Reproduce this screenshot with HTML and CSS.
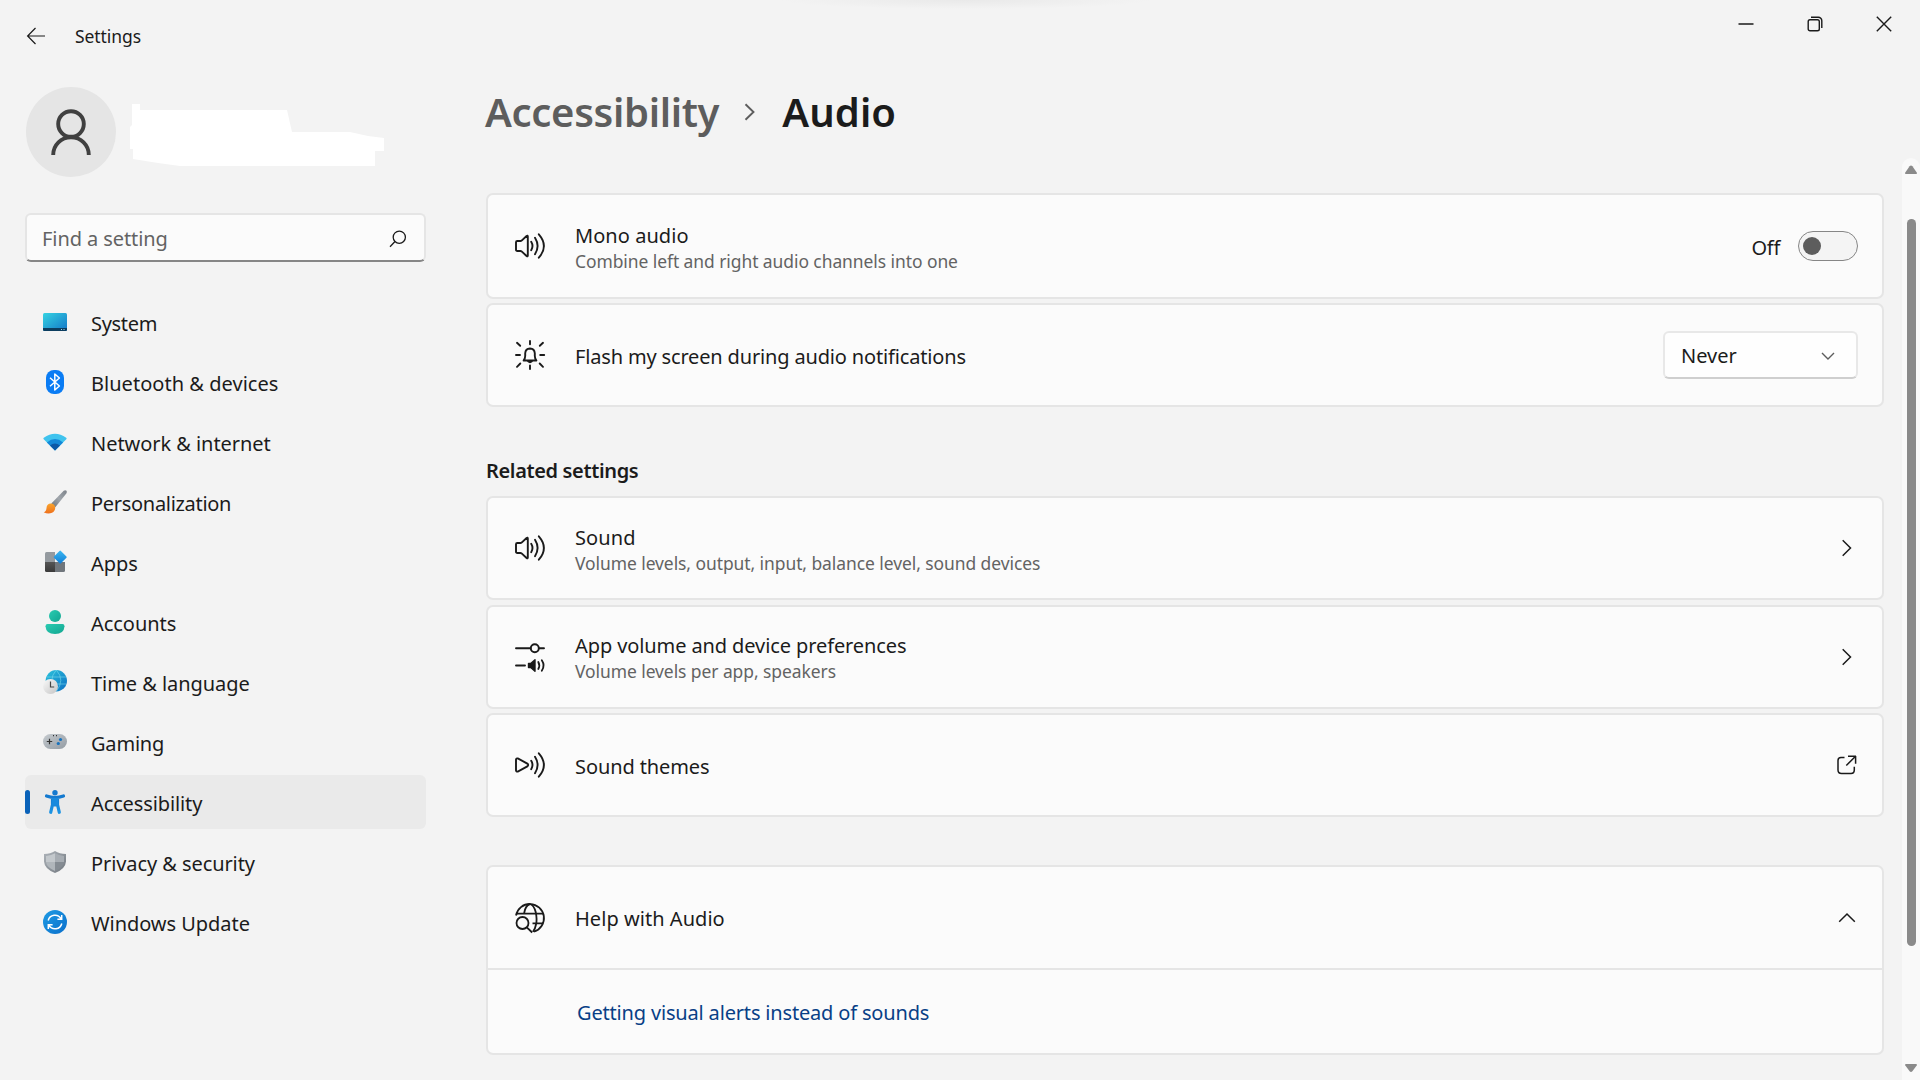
FILE: index.html
```html
<!DOCTYPE html>
<html lang="en">
<head>
<meta charset="utf-8">
<title>Settings</title>
<link rel="stylesheet" href="styles.css">
</head>
<body>
<svg class="defs" width="0" height="0" aria-hidden="true">
  <defs>
    <linearGradient id="gScreen" x1="0" y1="0" x2="1" y2="1"><stop offset="0" stop-color="#35d3e2"/><stop offset="1" stop-color="#1276c8"/></linearGradient>
    <linearGradient id="gBrush" x1="1" y1="0" x2="0" y2="1"><stop offset="0" stop-color="#7c8289"/><stop offset=".5" stop-color="#a0a6ac"/><stop offset="1" stop-color="#6d7379"/></linearGradient>
    <linearGradient id="gBristle" x1="0" y1="0" x2="0" y2="1"><stop offset="0" stop-color="#f9a52c"/><stop offset="1" stop-color="#ee6f1c"/></linearGradient>
    <linearGradient id="gDiamond" x1="0" y1="0" x2="1" y2="1"><stop offset="0" stop-color="#3cb9f2"/><stop offset="1" stop-color="#0f7cd6"/></linearGradient>
    <linearGradient id="gDark" x1="0" y1="0" x2="0" y2="1"><stop offset="0" stop-color="#555"/><stop offset="1" stop-color="#3a3a3a"/></linearGradient>
    <linearGradient id="gGreen" x1="0" y1="0" x2="1" y2="1"><stop offset="0" stop-color="#2acbb2"/><stop offset="1" stop-color="#12a690"/></linearGradient>
    <linearGradient id="gGlobe" x1="0" y1="0" x2="1" y2="1"><stop offset="0" stop-color="#2cc3dc"/><stop offset="1" stop-color="#0d6fc2"/></linearGradient>
    <linearGradient id="gClock" x1="0" y1="0" x2="1" y2="1"><stop offset="0" stop-color="#fafafa"/><stop offset="1" stop-color="#c4c4c4"/></linearGradient>
    <linearGradient id="gPad" x1="0" y1="0" x2="1" y2="1"><stop offset="0" stop-color="#c6cbcf"/><stop offset="1" stop-color="#939ba3"/></linearGradient>
    <linearGradient id="gPerson" x1="0" y1="0" x2="0" y2="1"><stop offset="0" stop-color="#1479cf"/><stop offset="1" stop-color="#1b93e3"/></linearGradient>
    <linearGradient id="gShield" x1="0" y1="0" x2="1" y2="1"><stop offset="0" stop-color="#aeb4ba"/><stop offset="1" stop-color="#70777e"/></linearGradient>
    <linearGradient id="gUpdate" x1="0" y1="0" x2="1" y2="1"><stop offset="0" stop-color="#1e9be4"/><stop offset="1" stop-color="#0a6fcb"/></linearGradient>
    <g id="waves" fill="none" stroke="#1a1a1a" stroke-width="1.9" stroke-linecap="round">
      <path d="M16.2 10.8q2.6 4.2 0 8.4M20 6.8q5.2 8.200 0 16.400M23.800 3.300q10.200 11.700 0 23.400"/>
    </g>
    <g id="speaker"><path d="M1 11.300q0-1.300 1.300-1.300h3.200q.6 0 1.100-.4L11.600 5q1.200-.9 1.200.6v18.800q0 1.500-1.200.6L6.600 20.400q-.5-.4-1.100-.4H2.300Q1 20 1 18.700z" fill="none" stroke="#1a1a1a" stroke-width="1.900" stroke-linejoin="round"/><use href="#waves"/></g>
  </defs>
</svg>

<div class="window">
  <header class="titlebar">
    <svg class="back" width="20" height="18" viewBox="0 0 20 18"><path d="M9.500 1L1.600 9l7.900 8M1.600 9h17.400" fill="none" stroke="#1a1a1a" stroke-width="1.200"/></svg>
    <span class="app-name">Settings</span>
    <div class="controls">
      <span class="control"><svg width="16" height="16"><path d="M.5 8h15" stroke="#1a1a1a" stroke-width="1.500"/></svg></span>
      <span class="control"><svg width="16" height="16" fill="none" stroke="#1a1a1a" stroke-width="1.400"><rect x="1.200" y="3.700" width="11.100" height="11.100" rx="1.800"/><path d="M4 1.200h7.300a3.500 3.500 0 0 1 3.500 3.500V12"/></svg></span>
      <span class="control"><svg width="16" height="16"><path d="M.8.800l14.400 14.400M15.200.800L.8 15.200" stroke="#1a1a1a" stroke-width="1.400"/></svg></span>
    </div>
  </header>

  <div class="body">
    <aside class="sidebar">
      <div class="profile">
        <div class="avatar"><svg width="42" height="48" viewBox="0 0 42 48" fill="none" stroke="#404040" stroke-width="3.900"><circle cx="21" cy="15" r="12.800"/><path d="M3.200 46c0-10.200 8-17.700 17.800-17.700S38.800 35.800 38.800 46"/></svg></div>
        <svg class="account" width="256" height="64" viewBox="129 103 256 64"><path d="M132 104h8v6h147l5 22h58l18 4 16 2v13h-9v15H180l-22-3-25-4v-10h-3v-22l2-2z" fill="#fff"/></svg>
      </div>

      <div class="search">
        <span class="placeholder">Find a setting</span>
        <svg width="18" height="18" viewBox="0 0 18 18" fill="none" stroke="#1a1a1a" stroke-width="1.300"><circle cx="10.300" cy="7.200" r="6.100"/><path d="M6 11.500L1 16.700"/></svg>
      </div>

      <nav class="nav">
        <a class="item system"><svg width="24" height="24" viewBox="0 0 24 24"><rect y="3" width="24" height="18" rx="1.500" fill="url(#gScreen)"/><path d="M0 18h24v1.500a1.500 1.500 0 0 1-1.500 1.500h-21A1.500 1.500 0 0 1 0 19.500z" fill="#0c3d5f"/><path d="M18 19.500h1M20.500 19.500h1" stroke="#9fd8ee"/></svg><span>System</span></a>
        <a class="item bluetooth"><svg width="24" height="24" viewBox="0 0 24 24"><rect x="3" width="18" height="24" rx="8" fill="#0a7cf4"/><path d="M7 7.800l9.400 8.200-4.600 4V4l4.600 4L7 16.200" fill="none" stroke="#fff" stroke-width="1.500" stroke-linejoin="round"/></svg><span>Bluetooth &amp; devices</span></a>
        <a class="item"><svg width="24" height="24" viewBox="0 0 24 24"><path d="M12 20.500L.5 9q-.4-.7.300-1.200Q12-.2 23.200 7.800q.7.500.3 1.200z" fill="#3fc3ee"/><path d="M12 20.500L3.900 12.400q8.100-6.800 16.200 0z" fill="#1488d8"/><path d="M12 20.500L7 15.500q5-4 10 0z" fill="#0c58a6"/></svg><span>Network &amp; internet</span></a>
        <a class="item personal"><svg width="24" height="24" viewBox="0 0 24 24"><path d="M8.300 13.500L20.700.8Q22.300-.4 23.500.8q.9 1.300-.2 2.800L12.300 17.300z" fill="url(#gBrush)"/><path d="M.7 22.300q2.700-.8 2.800-4.300.3-4.300 4.300-4.500 3.900.1 4.400 4 .1 3.600-3.200 5.300-4 1.600-8.300-.5z" fill="url(#gBristle)"/></svg><span>Personalization</span></a>
        <a class="item apps"><svg width="24" height="24" viewBox="0 0 24 24"><path d="M2 3.500A1.500 1.500 0 0 1 3.500 2H12v10H2z" fill="#949a9f"/><path d="M12 12h10v8.500a1.500 1.500 0 0 1-1.500 1.500H12z" fill="#70767c"/><path d="M2 12h10v10H3.500A1.500 1.500 0 0 1 2 20.500z" fill="url(#gDark)"/><rect x="12.300" y="2.200" width="9.800" height="9.800" rx="1" transform="rotate(45 17.200 7.100)" fill="url(#gDiamond)"/></svg><span>Apps</span></a>
        <a class="item"><svg width="24" height="24" viewBox="0 0 24 24" fill="url(#gGreen)"><circle cx="12" cy="6" r="6"/><path d="M4.500 14h15q2 0 2 2.200Q21 24 12 24t-9.500-7.800Q2.500 14 4.500 14z"/></svg><span>Accounts</span></a>
        <a class="item"><svg width="24" height="24" viewBox="0 0 24 24"><circle cx="13.300" cy="10.700" r="10.700" fill="url(#gGlobe)"/><path d="M4 7h19M4 14h19M13.300 0q-9 10 0 21.400M13.300 0q9 10 0 21.400" fill="none" stroke="#7fe0ee" stroke-opacity=".55"/><circle cx="7.500" cy="16.400" r="7.500" fill="url(#gClock)"/><path d="M7.500 11.500v5.500h3.700" fill="none" stroke="#444" stroke-width="1.200"/></svg><span>Time &amp; language</span></a>
        <a class="item gaming"><svg width="24" height="24" viewBox="0 0 24 24"><rect y="4" width="24" height="15" rx="7.500" fill="url(#gPad)"/><path d="M3.800 11.500h5.400M6.500 8.800v5.400M10 5.700h1M13 5.700h1" stroke="#333" stroke-width="1.200"/><circle cx="17.500" cy="9.500" r="1.600" fill="#1671bd"/><circle cx="15.300" cy="13.500" r="1.600" fill="#1671bd"/></svg><span>Gaming</span></a>
        <a class="item selected"><svg width="24" height="24" viewBox="0 0 24 24"><circle cx="12" cy="2.700" r="2.700" fill="#1479cf"/><path d="M3.500 6Q12 9.200 20.500 6M9.500 8h5v7h-5zM10 12.500L7.700 22.300M14 12.500l2.300 9.800" fill="none" stroke="url(#gPerson)" stroke-width="3.200" stroke-linecap="round" stroke-linejoin="round"/><path d="M9 8h6v7H9z" fill="#178ade"/></svg><span>Accessibility</span></a>
        <a class="item privacy"><svg width="24" height="24" viewBox="0 0 24 24"><path d="M12 1q4.500 3 11 3v7.500Q22.500 19 12 23 1.500 19 1 11.500V4q6.500 0 11-3z" fill="url(#gShield)"/><path d="M12 3.300q3.800 2.300 9 2.600V12h-9z" fill="#a7adb3"/><path d="M12 3.300Q8.200 5.600 3 5.900V12h9z" fill="#c3c8cc"/><path d="M3 12h9v8.900Q3.500 17.300 3 12z" fill="#b0b6bb"/><path d="M21 12h-9v8.900Q20.500 17.300 21 12z" fill="#858c93"/></svg><span>Privacy &amp; security</span></a>
        <a class="item"><svg width="24" height="24" viewBox="0 0 24 24"><circle cx="12" cy="12" r="12" fill="url(#gUpdate)"/><path d="M5.200 10.500A7 7 0 0 1 18 8.600M18.800 13.500A7 7 0 0 1 6 15.400M18.700 5v4.300h-4.300M5.300 19v-4.300h4.300" fill="none" stroke="#fff" stroke-width="1.500"/></svg><span>Windows Update</span></a>
      </nav>
    </aside>

    <main class="content">
      <h1 class="crumbs">
        <span class="parent">Accessibility</span>
        <svg width="12" height="18" viewBox="0 0 12 18"><path d="M1.500 1.200L9.500 9l-8 7.800" fill="none" stroke="#5d5d5d" stroke-width="1.900"/></svg>
        <span class="current">Audio</span>
      </h1>

      <section class="cards options">
        <div class="card tall">
          <svg class="icon" width="32" height="30"><use href="#speaker"/></svg>
          <div class="labels"><div class="label mono">Mono audio</div><div class="hint">Combine left and right audio channels into one</div></div>
          <span class="state">Off</span>
          <span class="toggle"><span class="knob"></span></span>
        </div>
        <div class="card">
          <svg class="icon" width="32" height="30" fill="none" stroke="#1a1a1a" stroke-width="1.900" stroke-linecap="round" stroke-linejoin="round"><path d="M15 1v3.300M15 25.500V29M1 15h4M25.200 15h4M2 2.800l3.200 3M28 2.800l-3.200 3M2 26.800l3.300-3.300M28 26.800l-3.300-3.300"/><path d="M8.600 20.500q1.600-2.300 1.600-4.500v-2.800q.3-4.400 4.800-4.700 4.500.3 4.800 4.700V16q0 2.200 1.600 4.500z"/><path d="M13.200 21.300q1.800 1.600 3.600 0" stroke-width="2"/></svg>
          <div class="labels"><div class="label flash">Flash my screen during audio notifications</div></div>
          <div class="select"><span>Never</span><svg width="14" height="9"><path d="M1 1l6 6 6-6" fill="none" stroke="#5d5d5d" stroke-width="1.400"/></svg></div>
        </div>
      </section>

      <h2 class="section-title">Related settings</h2>
      <section class="cards">
        <div class="card">
          <svg class="icon" width="32" height="30"><use href="#speaker"/></svg>
          <div class="labels"><div class="label sound">Sound</div><div class="hint">Volume levels, output, input, balance level, sound devices</div></div>
          <svg class="go" width="12" height="18"><path d="M1.700 1.200L9.500 9l-7.800 7.800" fill="none" stroke="#1a1a1a" stroke-width="1.500"/></svg>
        </div>
        <div class="card">
          <svg class="icon" width="32" height="30" fill="none" stroke="#1a1a1a" stroke-width="1.900" stroke-linecap="round"><path d="M1 6.200h14.500M24.200 6.200H29M1 23.500h9"/><circle cx="19.800" cy="6.200" r="4"/><path d="M13.500 21.500h2.200l4.300-3.800v11.600l-4.300-3.800h-2.200z" fill="#1a1a1a" stroke-width="1.400" stroke-linejoin="round"/><path d="M23.300 20q2 3.500 0 7M26.800 18.300q3.600 5.200 0 10.400" stroke-width="1.800"/></svg>
          <div class="labels"><div class="label">App volume and device preferences</div><div class="hint">Volume levels per app, speakers</div></div>
          <svg class="go" width="12" height="18"><path d="M1.700 1.200L9.500 9l-7.800 7.800" fill="none" stroke="#1a1a1a" stroke-width="1.500"/></svg>
        </div>
        <div class="card">
          <svg class="icon" width="32" height="30"><path d="M1 9.600q.2-1.600 1.800-1.100l9.500 5.100q1.800 1.400 0 2.800l-9.500 5.100q-1.600.5-1.800-1.100z" fill="none" stroke="#1a1a1a" stroke-width="1.900"/><use href="#waves"/></svg>
          <div class="labels"><div class="label">Sound themes</div></div>
          <svg class="open" width="20" height="20" fill="none" stroke="#1a1a1a" stroke-width="1.500"><path d="M7.500 2.500H4Q1 2.500 1 5.500V15q0 3.500 3.500 3.500H14q3.300 0 3.300-3.500v-3.300M11 1.300h8M18.600 1v7.700M18.300 1.500L9.300 10.500"/></svg>
        </div>
      </section>

      <section class="expander">
        <div class="card-head">
          <svg class="icon" width="32" height="30" fill="none" stroke="#1a1a1a" stroke-width="1.800"><path d="M1 12.500A14.100 14.100 0 1 1 19 28.600"/><path d="M1.500 10.600h26.700M17.500 20.300h10.700M9 10.600Q10.500 2 15 1q3.800 1 5.700 8 1.600 7.500.3 12.500-.7 4-3 7.200"/><circle cx="7.500" cy="20" r="6"/><path d="M11.800 24.300l5.400 5.200"/></svg>
          <div class="labels"><div class="label help">Help with Audio</div></div>
          <svg class="up" width="18" height="11"><path d="M1.200 9.800L9 2l7.800 7.800" fill="none" stroke="#1a1a1a" stroke-width="1.500"/></svg>
        </div>
        <div class="card-body"><a class="link">Getting visual alerts instead of sounds</a></div>
      </section>
    </main>

    <div class="scrollbar">
      <svg width="14" height="10"><path d="M2 9Q.3 9 1.300 7.500L5.600 1.300q1.400-1.400 2.800 0L12.700 7.500Q13.700 9 12 9z" fill="#8a8a8a"/></svg>
      <span class="thumb"></span>
      <svg class="down" width="14" height="10"><path d="M2 1Q.3 1 1.300 2.500L5.600 8.200q1.400 1.400 2.800 0L12.700 2.500Q13.700 1 12 1z" fill="#8a8a8a"/></svg>
    </div>
  </div>
</div>
</body>
</html>
```
FILE: styles.css
```css
* { box-sizing: border-box; }
body {
  margin: 0;
  font: 20px/26px "Noto Sans", "Open Sans", sans-serif;
  color: #1b1b1b;
  background: #f3f3f3;
  overflow: hidden;
}
svg { display: block; flex: none; overflow: visible; }
.defs { position: absolute; }
span, .label, .hint, .link { white-space: nowrap; }

.window { width: 1920px; height: 1080px; display: flex; flex-direction: column; }

.titlebar {
  height: 72px;
  flex: none;
  display: flex;
  align-items: center;
  padding-left: 26px;
  background: radial-gradient(ellipse 185px 9px at 966px 0, #e9e9e9, #f3f3f3);
}
.app-name { margin-left: 29px; font-size: 17.5px; letter-spacing: -.07px; }
.controls { display: flex; margin-left: auto; padding-right: 2px; align-self: flex-start; }
.control { width: 69px; height: 47px; display: flex; align-items: center; justify-content: center; }

.body { flex: 1; min-height: 0; display: flex; }

.sidebar { width: 426px; padding: 15px 0 0 25px; }
.profile { display: flex; gap: 13px; height: 90px; padding-left: 1px; }
.avatar {
  width: 90px; height: 90px;
  padding-top: 2px;
  border-radius: 50%;
  background: #e5e5e5;
  display: flex; align-items: center; justify-content: center;
}
.account { margin-top: 16px; }
.search {
  height: 49px;
  margin-top: 36px;
  padding: 1px 17px 0 15px;
  display: flex; align-items: center; justify-content: space-between;
  background: #fbfbfb;
  border: 2px solid #e5e5e5;
  border-bottom-color: #868686;
  border-radius: 6px;
}
.search svg { margin-top: 2px; }
.placeholder { color: #636363; padding-top: 2px; letter-spacing: -.08px; }

.nav { margin-top: 33px; display: flex; flex-direction: column; gap: 6px; }
.item {
  height: 54px;
  padding-left: 18px;
  display: flex; align-items: center; gap: 24px;
  border-radius: 6px;
  letter-spacing: -.05px;
}
.item span { padding-top: 4px; }
.item.system, .item.personal { letter-spacing: -.3px; }
.item.bluetooth { letter-spacing: .03px; }
.item.privacy { letter-spacing: -.08px; }
.item.gaming { letter-spacing: -.2px; }
.item.selected { background: #eaeaea; letter-spacing: -.12px; padding-left: 0; gap: 0; }
.item.selected::before { content: ""; width: 5px; height: 24px; margin-right: 13px; border-radius: 2.5px; background: #0a62b9; }
.item.selected span { margin-left: 24px; }

.content { width: 1398px; margin-left: 60px; }
.crumbs {
  margin: 0 0 0 -1px;
  padding-top: 13px;
  height: 121px;
  display: flex; align-items: flex-start;
  font-size: 40px; line-height: 54px; font-weight: 600;
}
.crumbs .parent { color: #5d5d5d; letter-spacing: -.32px; }
.crumbs svg { margin: 18px 26px 0 25px; }
.crumbs .current { letter-spacing: .1px; }

.cards { display: flex; flex-direction: column; gap: 4.5px; }
.cards.options { gap: 4px; }
.card {
  height: 104px;
  padding: 0 24px 0 27px;
  display: flex; align-items: center;
  background: #fbfbfb;
  border: 2px solid #e5e5e5;
  border-radius: 7px;
}
.card.tall { height: 106px; }
.icon { margin-right: 28px; }
.labels { flex: 1; padding-top: 3px; letter-spacing: -.1px; }
.hint { font-size: 17.46px; line-height: 24px; color: #636363; letter-spacing: -.06px; }
.label.mono { letter-spacing: .05px; }
.label.flash { letter-spacing: -.16px; }
.label.sound { letter-spacing: .1px; }
.label.help { letter-spacing: .04px; }

.state { padding-top: 3px; margin-right: 18px; letter-spacing: -.3px; }
.toggle {
  width: 60px; height: 30px;
  padding: 0 4px;
  display: flex; align-items: center;
  background: #f4f4f4;
  border: 1.5px solid #868686;
  border-radius: 15px;
}
.knob { width: 18px; height: 18px; border-radius: 50%; background: #5d5d5d; }

.select {
  width: 195px; height: 48px;
  padding: 2px 21px 0 16px;
  display: flex; align-items: center; justify-content: space-between;
  background: #fefefe;
  border: 2px solid #e8e8e8;
  border-bottom-color: #cfcfcf;
  border-radius: 6px;
}
.go { margin-right: 5px; }
.open { margin-right: 1px; }

.section-title {
  margin: 51px 0 12px;
  font-size: 20px; line-height: 26px; font-weight: 600;
  letter-spacing: -.36px;
}

.expander {
  height: 190px;
  margin-top: 48px;
  background: #fbfbfb;
  border: 2px solid #e5e5e5;
  border-radius: 7px;
}
.card-head {
  height: 103px;
  padding: 0 26px 0 27px;
  display: flex; align-items: center;
  border-bottom: 2px solid #e5e5e5;
}
.card-body { height: 83px; padding: 3px 0 0 89px; display: flex; align-items: center; }
.link { color: #083f86; letter-spacing: -.17px; }

.scrollbar {
  width: 18px;
  margin: 86px 0 0 18px;
  padding: 7px 0 7px;
  display: flex; flex-direction: column; align-items: center;
  background: #f9f9f9;
  border-radius: 9px 9px 0 0;
}
.thumb { width: 9px; height: 727px; margin-top: 44px; border-radius: 4.5px; background: #8a8a8a; }
.down { margin-top: auto; }
```
